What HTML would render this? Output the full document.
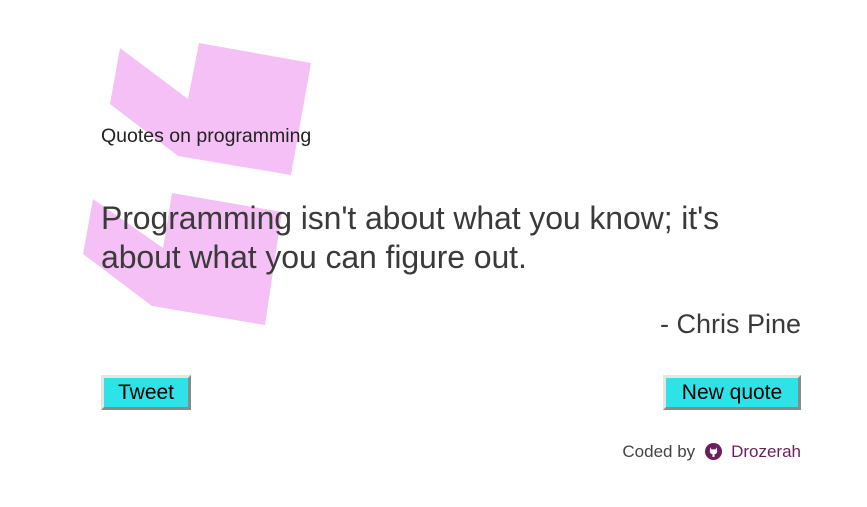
<!DOCTYPE html>
<html><head><meta charset="utf-8"><style>
html,body{margin:0;padding:0;background:#fff;width:867px;height:507px;overflow:hidden;font-family:"Liberation Sans",sans-serif;color:#333}
svg.bg{position:absolute;left:0;top:0}
.t{position:absolute;white-space:nowrap}
.btn{position:absolute;height:35px;box-sizing:border-box;background:#2ee3e8;border:3px solid;border-color:#e6e6e6 #8a8a8a #8a8a8a #e6e6e6;color:#000;font-size:21px;text-align:center;line-height:29px}
</style></head><body>
<svg class="bg" width="867" height="507">
<polygon fill="#f5c0f5" points="120,48 188,99 199,43 311,63 291,175 178,156 110,104"/>
<polygon fill="#f5c0f5" points="93,199 163,248 172,193 282,212 265,325 152,306 83,254"/>
</svg>
<div class="t" style="left:101px;top:125px;font-size:19.5px;color:#222">Quotes on programming</div>
<div class="t" style="left:101px;top:199px;font-size:32px;line-height:39px;color:#3a3a3a;letter-spacing:-0.1px">Programming isn't about what you know; it's<br>about what you can figure out.</div>
<div class="t" style="right:66px;top:309px;font-size:27px;color:#3a3a3a">- Chris Pine</div>
<div class="btn" style="left:101px;top:375px;width:90px">Tweet</div>
<div class="btn" style="left:663px;top:375px;width:138px">New quote</div>
<div class="t" style="right:66px;top:442px;font-size:17px;color:#444">Coded by&nbsp; <svg width="17" height="17" viewBox="0 0 16 16" style="vertical-align:-3px"><circle cx="8" cy="8" r="8" fill="#6b1f5c"/><path d="M5 4 L6 6 L10 6 L11 4 L11.5 8 Q11 10.5 9 10.5 L9 13 L7 13 L7 10.5 Q5 10.5 4.5 8 Z" fill="#fff"/></svg>&nbsp; <span style="color:#6b1f5c">Drozerah</span></div>
</body></html>
